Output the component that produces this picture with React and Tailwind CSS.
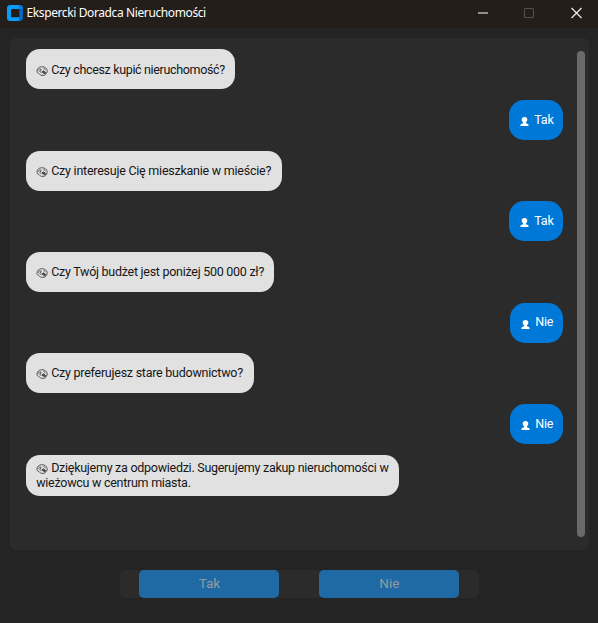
const messages = [
  { from: 'bot', text: 'Czy chcesz kupić nieruchomość?', size: 'w-[209px]', tracking: 'tracking-[-0.34px]' },
  { from: 'user', text: 'Tak', size: 'w-[54.5px]' },
  { from: 'bot', text: 'Czy interesuje Cię mieszkanie w mieście?', size: 'w-[256px]', tracking: 'tracking-[-0.24px]' },
  { from: 'user', text: 'Tak', size: 'w-[54.5px]' },
  { from: 'bot', text: 'Czy Twój budżet jest poniżej 500 000 zł?', size: 'w-[248px]', tracking: 'tracking-[-0.27px]' },
  { from: 'user', text: 'Nie', size: 'w-[53.5px]' },
  { from: 'bot', text: 'Czy preferujesz stare budownictwo?', size: 'w-[228px]', tracking: 'tracking-[-0.25px]' },
  { from: 'user', text: 'Nie', size: 'w-[53.5px]' },
];

function BotIcon() {
  return (
    <svg className="mr-[3px] inline-block h-[10px] w-[12px] align-[-2px]" viewBox="0 0 12 10" fill="none" stroke="#3a3838" strokeWidth="0.8">
      <path d="M1 5.2C1 2.6 3 .8 5.6.7C8.6.6 11 2.2 11.2 4.6C11.3 5.8 11 6.4 10.6 7" />
      <path d="M1 5.2C1 6.6 1.8 7.4 3 7.5L4.8 9.3H8.6L10.6 7" />
      <path d="M2 4.8L3.8 2.7L5.4 3.7L3.6 5.4L5.2 6.6M7.4 2.2L9.5 3.8" />
      <path d="M5.8 6L7.6 4.8L9.8 6.6L8.8 8Z" fill="#5a504c" />
    </svg>
  );
}

function UserIcon() {
  return (
    <svg className="mt-[3px] h-[9px] w-[9px] shrink-0" viewBox="0 0 9 9" fill="#fff">
      <path d="M4.5 0C6.4 0 7.3 1.1 7.3 2.6C7.3 3.9 6.7 4.8 5.9 5.4V6.2L8 6.9Q8.6 7.2 8.6 9H.4Q.4 7.2 1 6.9L3.1 6.2V5.4C2.3 4.8 1.7 3.9 1.7 2.6C1.7 1.1 2.6 0 4.5 0Z" />
    </svg>
  );
}

function Message({ from, text, size, tracking }) {
  if (from === 'user') {
    return (
      <div className={`flex h-10 items-center self-end rounded-[15px] bg-[#0078d8] pl-[11.5px] text-white ${size}`}>
        <UserIcon />
        <span className="ml-[5px] text-[12.5px] tracking-[-0.15px]">{text}</span>
      </div>
    );
  }
  return (
    <div className={`flex h-10 items-center rounded-[14px] bg-[#e1e1e1] pl-[10.5px] text-[#161616] ${size}`}>
      <p className={`whitespace-nowrap pt-[1px] text-[12.5px] ${tracking}`}>
        <BotIcon />
        {text}
      </p>
    </div>
  );
}

export default function App() {
  return (
    <div className="flex h-[623px] w-[598px] flex-col overflow-hidden bg-[#242424] font-['Roboto',sans-serif]">
      <header className="flex h-7 shrink-0 items-center bg-[#241e1a] pl-[7px] text-white">
        <svg className="mt-[-2px] h-4 w-4" viewBox="0 0 16 16">
          <rect width="16" height="16" rx="3.5" fill="#0a65b8" />
          <path d="M3.5 0H12V16H3.5Q0 16 0 12.5V3.5Q0 0 3.5 0Z" fill="#0a9cfa" />
          <path d="M12 0H12.5Q16 0 16 3.5L12 4.5Z" fill="#087bd3" />
          <rect x="4" y="4" width="8.3" height="8.3" rx="1.2" fill="#241e1a" />
        </svg>
        <h1 className="mt-[-2px] ml-[3.5px] font-['Noto_Sans',sans-serif] text-[12px] tracking-[-0.39px] whitespace-nowrap">Ekspercki Doradca Nieruchomości</h1>
        <div className="mt-[-2px] mr-[16px] ml-auto flex items-center">
          <svg className="h-3 w-[104px]" viewBox="0 0 104 12" fill="none">
            <path d="M0 6H10" stroke="#dedbd8" strokeWidth="1.2" />
            <rect x="46.5" y="1.5" width="9" height="9" rx="0.5" stroke="#57514d" />
            <path d="M93.5 1L103.5 11M103.5 1L93.5 11" stroke="#eee" strokeWidth="1.2" />
          </svg>
        </div>
      </header>

      <main className="mt-[10px] ml-[10px] flex h-[512px] w-[579px] shrink-0 rounded-md bg-[#2b2b2b]">
        <div className="mt-[11.4px] ml-[15.7px] flex w-[537.5px] flex-col items-start gap-[10.65px]">
          {messages.map((message, i) => (
            <Message key={i} {...message} />
          ))}
          <div className="flex h-[41px] w-[373px] items-center rounded-[14px] bg-[#e1e1e1] pl-[10.5px] text-[#161616]">
            <p className="text-[12.5px] leading-[15px] tracking-[-0.27px] whitespace-nowrap">
              <BotIcon />
              Dziękujemy za odpowiedzi. Sugerujemy zakup nieruchomości w
              <br />
              wieżowcu w centrum miasta.
            </p>
          </div>
        </div>
        <div className="mt-[13px] ml-[14px] h-[486px] w-2 rounded-full bg-[#6a6a6a]" />
      </main>

      <footer className="mt-5 ml-[120px] flex h-7 w-[359px] gap-10 rounded-md bg-[#2b2b2b] pl-[19.4px] text-[13.5px] text-[#949aa0]">
        <button className="h-7 w-[140px] rounded-[5px] bg-[#1f6aa5] pb-[2px]">Tak</button>
        <button className="h-7 w-[140px] rounded-[5px] bg-[#1f6aa5] pb-[2px]">Nie</button>
      </footer>
    </div>
  );
}
